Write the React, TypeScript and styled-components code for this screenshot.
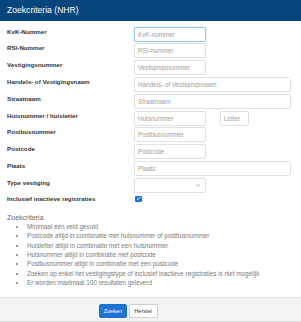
import React from "react";
import styled, { createGlobalStyle } from "styled-components";

const Global = createGlobalStyle`
  html, body { margin: 0; padding: 0; background: #fff; }
  body { font-family: "Liberation Sans", Arial, sans-serif; }
  * { box-sizing: border-box; }
`;

const Panel = styled.div`
  width: 301px;
  display: flex;
  flex-direction: column;
`;

const Header = styled.div`
  height: 21px;
  background: #06467c;
  color: #fff;
  font-size: 8.6px;
  line-height: 21px;
  padding-left: 7px;
`;

const Body = styled.div`
  padding: 5.7px 10px 0 7px;
  display: flex;
  flex-direction: column;
`;

const Row = styled.div<{ $h?: number; $center?: boolean }>`
  display: flex;
  align-items: ${(p) => (p.$center ? "center" : "flex-start")};
  height: ${(p) => p.$h ?? 15}px;
  margin-bottom: 1.78px;
`;

const Label = styled.div<{ $lh?: number }>`
  width: 127px;
  flex: none;
  font-weight: bold;
  font-size: 6.2px;
  line-height: ${(p) => p.$lh ?? 10}px;
  color: #333;
`;

const Fields = styled.div`
  display: flex;
  gap: 14px;
`;

const Input = styled.input<{ $w: number; $focus?: boolean }>`
  width: ${(p) => p.$w}px;
  height: 15px;
  border: 1px solid ${(p) => (p.$focus ? "#9cc8ec" : "#e0e0e0")};
  box-shadow: ${(p) => (p.$focus ? "0 0 2px rgba(102,175,233,0.45)" : "none")};
  border-radius: 2px;
  padding: 0 3px;
  font-family: "Liberation Sans", Arial, sans-serif;
  font-size: 6.3px;
  color: #555;
  outline: none;
  background: #fff;
  &::placeholder { color: #a0a0a0; }
`;

const Select = styled.div`
  width: 72px;
  height: 15px;
  border: 1px solid #e0e0e0;
  border-radius: 2px;
  display: flex;
  align-items: center;
  justify-content: flex-end;
  padding-right: 5px;
  background: #fff;
`;

const Check = styled.div`
  width: 6.5px;
  height: 6.5px;
  margin-left: 1px;
  border-radius: 1px;
  background: #1a73e8;
  display: flex;
  align-items: center;
  justify-content: center;
`;

const Criteria = styled.div`
  margin-top: 7.5px;
`;

const CritTitle = styled.div`
  font-size: 7px;
  line-height: 9.33px;
  color: #666;
`;

const List = styled.ul`
  margin: 0;
  padding-left: 20px;
  list-style: disc;
`;

const Item = styled.li`
  font-size: 6.3px;
  line-height: 9.33px;
  color: #7a7a7a;
`;

const Footer = styled.div`
  margin-top: 10px;
  border-top: 1px solid #e6e6e6;
  border-bottom: 1px solid #d8d8d8;
  background: #f4f4f4;
  padding: 5.3px 0 3px 99px;
  display: flex;
  gap: 1.6px;
`;

const Button = styled.button<{ $primary?: boolean; $w: number }>`
  width: ${(p) => p.$w}px;
  height: 14px;
  padding: 0;
  border-radius: 2px;
  border: 1px solid ${(p) => (p.$primary ? "#1a6fce" : "#cfcfcf")};
  background: ${(p) => (p.$primary ? "#1b74d6" : "#fff")};
  color: ${(p) => (p.$primary ? "#fff" : "#333")};
  font-family: "Liberation Sans", Arial, sans-serif;
  font-size: 5.5px;
  line-height: 12px;
`;

type F = { label: string; fields: { ph: string; w: number; focus?: boolean }[] };

const rows: F[] = [
  { label: "KvK-Nummer", fields: [{ ph: "KvK-nummer", w: 72, focus: true }] },
  { label: "RSI-Nummer", fields: [{ ph: "RSI-nummer", w: 72 }] },
  { label: "Vestigingsnummer", fields: [{ ph: "Vestigingsnummer", w: 72 }] },
  { label: "Handels- of Vestigingsnaam", fields: [{ ph: "Handels- of Vestigingsnaam", w: 157 }] },
  { label: "Straatnaam", fields: [{ ph: "Straatnaam", w: 157 }] },
  { label: "Huisnummer / huisletter", fields: [{ ph: "Huisnummer", w: 72 }, { ph: "Letter", w: 29 }] },
  { label: "Postbusnummer", fields: [{ ph: "Postbusnummer", w: 72 }] },
  { label: "Postcode", fields: [{ ph: "Postcode", w: 72 }] },
  { label: "Plaats", fields: [{ ph: "Plaats", w: 157 }] },
];

const items = [
  "Minimaal één veld gevuld",
  "Postcode altijd in combinatie met huisnummer of postbusnummer",
  "Huisletter altijd in combinatie met een huisnummer",
  "Huisnummer altijd in combinatie met postcode",
  "Postbusnummer altijd in combinatie met een postcode",
  "Zoeken op enkel het vestigingstype of inclusief inactieve registraties is niet mogelijk",
  "Er worden maximaal 100 resultaten geleverd",
];

export default function App() {
  return (
    <>
      <Global />
      <Panel>
        <Header>Zoekcriteria (NHR)</Header>
        <Body>
          {rows.map((r) => (
            <Row key={r.label}>
              <Label>{r.label}</Label>
              <Fields>
                {r.fields.map((f) => (
                  <Input key={f.ph} $w={f.w} $focus={f.focus} placeholder={f.ph} />
                ))}
              </Fields>
            </Row>
          ))}
          <Row>
            <Label>Type vestiging</Label>
            <Select>
              <svg width="4" height="3" viewBox="0 0 4 3">
                <path d="M0.3 0.5 L2 2.4 L3.7 0.5" fill="none" stroke="#999" strokeWidth="0.8" />
              </svg>
            </Select>
          </Row>
          <Row $h={9} $center>
            <Label $lh={9}>Inclusief inactieve registraties</Label>
            <Check>
              <svg width="5" height="5" viewBox="0 0 5 5">
                <path d="M1 2.6 L2.1 3.6 L4 1.2" fill="none" stroke="#fff" strokeWidth="0.9" />
              </svg>
            </Check>
          </Row>
          <Criteria>
            <CritTitle>Zoekcriteria</CritTitle>
            <List>
              {items.map((t) => (
                <Item key={t}>{t}</Item>
              ))}
            </List>
          </Criteria>
        </Body>
        <Footer>
          <Button $primary $w={28}>Zoeken</Button>
          <Button $w={29}>Herstel</Button>
        </Footer>
      </Panel>
    </>
  );
}
